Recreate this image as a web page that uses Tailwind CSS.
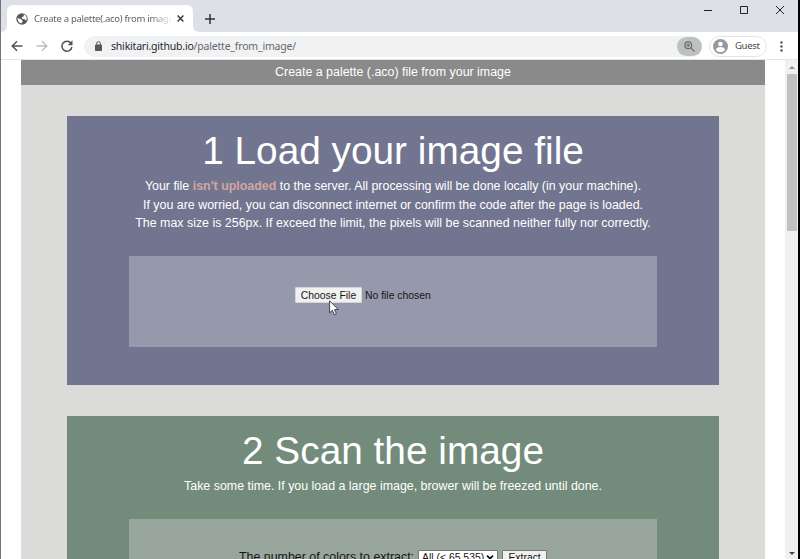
<!DOCTYPE html>
<html lang="en">
<head>
<meta charset="utf-8">
<title>Create a palette(.aco) from image</title>
<script src="https://cdn.jsdelivr.net/npm/@tailwindcss/browser@4"></script>
</head>
<body class="w-[800px] h-[559px] overflow-hidden bg-white font-['Liberation_Sans',Arial,sans-serif]">
<div class="relative w-[800px] h-[559px] overflow-hidden border-l border-l-[#737378] border-r-2 border-r-black flex flex-col">
  <!-- Tab strip -->
  <header class="h-8 shrink-0 bg-[#dde1e7] flex items-end font-['Noto_Sans',sans-serif]">
    <div class="w-1.5 h-full flex items-end bg-white"><div class="w-full h-full bg-[#dde1e7] rounded-br-md"></div></div>
    <div class="w-[186px] h-[27px] bg-white rounded-t-[6px] flex items-center pl-[9px] pr-2">
      <svg class="w-3 h-3 shrink-0" viewBox="0 0 24 24"><circle cx="12" cy="12" r="11.500" fill="#54585d"/><path d="M3 10l6 2 4 3v3l-3 3C6 20 3 16 3 10zM12 3h3l1 3-3 2-2 2 2 2h4l2 3 2-1c2-5-1-10-6-11z" fill="#fff"/></svg>
      <div class="ml-[6px] w-[137px] overflow-hidden whitespace-nowrap text-[9.500px] tracking-[-0.28px] leading-4 text-transparent bg-clip-text bg-linear-to-r from-[#55585c] from-85% to-[#f4f4f4]">Create a palette(.aco) from image</div>
      <svg class="w-[7px] h-[7px] shrink-0 ml-[6px]" viewBox="0 0 8 8" stroke="#333" stroke-width="1.600"><path d="M.7.7l6.600 6.600M7.300.7L.7 7.300"/></svg>
    </div>
    <div class="w-1.5 h-full bg-white"><div class="w-full h-full bg-[#dde1e7] rounded-bl-md"></div></div>
    <svg class="w-[10px] h-[10px] ml-[6px] mb-[8px]" viewBox="0 0 10 10" stroke="#333" stroke-width="1.500"><path d="M5 0v10M0 5h10"/></svg>
    <div class="ml-auto self-start flex items-center gap-[28px] mt-[5px] pr-[14px] text-[#222]">
      <svg class="w-2 h-[10px]" viewBox="0 0 8 10" stroke="currentColor"><path d="M0 5.500h8"/></svg>
      <svg class="w-2 h-[10px]" viewBox="0 0 8 10" stroke="currentColor" fill="none"><path d="M.5 1.500h7v7h-7z"/></svg>
      <svg class="w-2 h-[10px]" viewBox="0 0 8 10" stroke="currentColor"><path d="M0 1l8 8M8 1L0 9"/></svg>
    </div>
  </header>
  <!-- Toolbar -->
  <nav class="h-[28px] shrink-0 bg-white border-b border-[#e4e5e7] flex items-center pt-px pl-[10px] pr-[15px] font-['Noto_Sans',sans-serif]">
    <svg class="w-3 h-3" viewBox="0 0 12 12" fill="none" stroke="#505458" stroke-width="1.500"><path d="M11.500 6H1.500M6 1.200L1.200 6 6 10.800"/></svg>
    <svg class="w-3 h-3 ml-[13px]" viewBox="0 0 12 12" fill="none" stroke="#bbbdc0" stroke-width="1.400"><path d="M.5 6h10M6 1.200L10.800 6 6 10.800"/></svg>
    <svg class="w-3 h-3 ml-[13px]" viewBox="0 0 12 12" fill="none" stroke="#505458" stroke-width="1.500"><path d="M10 3.200A5 5 0 1 0 10.900 7"/><path d="M11.500.3v4.900H6.700z" fill="#505458" stroke="none"/></svg>
    <div class="ml-[11px] w-[618px] h-[21px] rounded-full bg-[#f0f2f4] flex items-center pl-[11px]">
      <svg class="w-[7px] h-[10px]" viewBox="0 0 7 10"><rect y="3.500" width="7" height="6.500" rx=".8" fill="#55585d"/><path d="M1.700 4V2.400a1.800 1.800 0 0 1 3.600 0V4" fill="none" stroke="#55585d"/></svg>
      <div class="ml-[9px] text-[10.500px] tracking-[-0.2px] leading-4 whitespace-nowrap text-[#65696e]"><span class="text-[#26292d]">shikitari.github.io</span>/palette_from_image/</div>
      <div class="ml-auto w-[25px] h-[19px] rounded-full bg-[#bdc1c0] flex items-center justify-center">
        <svg class="w-[11px] h-[11px]" viewBox="0 0 11 11" fill="none" stroke="#686c6e" stroke-width="1.200"><circle cx="4.200" cy="4.200" r="3.400"/><path d="M6.700 6.700L10.500 10.500M2.500 4.200h3.400M4.200 2.500v3.400"/></svg>
      </div>
    </div>
    <div class="ml-[7px] w-[58px] h-[21px] rounded-full border border-[#e2e4e6] flex items-center pl-[3px]">
      <svg class="w-[15px] h-[15px]" viewBox="0 0 15 15"><circle cx="7.500" cy="7.500" r="7.500" fill="#959b9b"/><circle cx="7.500" cy="5" r="2.300" fill="#fff"/><path d="M3 11c0-4 9-4 9 0-2 2.800-7 2.800-9 0z" fill="#fff"/></svg>
      <span class="ml-[7px] text-[9.500px] leading-4 tracking-[-0.3px] text-[#44484c]">Guest</span>
    </div>
    <svg class="ml-auto w-[3px] h-[11px]" viewBox="0 0 3 11" fill="#505458"><circle cx="1.500" cy="1.500" r="1.200"/><circle cx="1.500" cy="5.500" r="1.200"/><circle cx="1.500" cy="9.500" r="1.200"/></svg>
  </nav>
  <!-- Page -->
  <div class="flex-1 min-h-0 flex">
    <main class="w-[744px] ml-[20px] mr-[20px] bg-[#dbdcda] text-white text-center overflow-hidden">
      <div class="h-[25px] bg-[#8a8a8a] text-[12.420px] leading-[25px] whitespace-nowrap">Create a palette (.aco) file from your image</div>
      <section class="mt-[31px] mx-[46px] h-[269px] bg-[#72758f] pt-[12px] px-[62px]">
        <h1 class="text-[38.8px] leading-[46px] whitespace-nowrap">1 Load your image file</h1>
        <div class="mt-[3px] text-[12.420px] leading-[18.700px] whitespace-nowrap">
          <p>Your file <b class="text-[#d4a5a2]">isn't uploaded</b> to the server. All processing will be done locally (in your machine).</p>
          <p>If you are worried, you can disconnect internet or confirm the code after the page is loaded.</p>
          <p>The max size is 256px. If exceed the limit, the pixels will be scanned neither fully nor correctly.</p>
        </div>
        <div class="mt-[23px] h-[91px] bg-[#9698ac] pt-[31px] pl-[166px] flex items-start text-[10.4px] text-[#161616]">
          <button class="w-[67px] h-[16px] bg-[#f1f1f1] border border-[#d5d5d8] rounded-[1px] leading-[15px] whitespace-nowrap">Choose File</button>
          <span class="ml-[3px] leading-[17px] whitespace-nowrap">No file chosen</span>
        </div>
      </section>
      <section class="mt-[31px] mx-[46px] h-[269px] bg-[#738b7b] pt-[12px] px-[62px]">
        <h1 class="text-[38.8px] leading-[46px] whitespace-nowrap">2 Scan the image</h1>
        <p class="mt-[3px] text-[12.420px] leading-[18.700px] whitespace-nowrap">Take some time. If you load a large image, brower will be freezed until done.</p>
        <div class="mt-[23px] h-[91px] bg-[#99a69d] pt-[31px] flex items-start justify-center text-[10.4px] text-[#161616]">
          <label class="text-[12.420px] leading-[15px] whitespace-nowrap">The number of colors to extract:</label>
          <div class="ml-[4px] w-[80px] h-[16px] bg-white border border-[#777] rounded-[1px] flex items-center pl-[3px] leading-[14px] whitespace-nowrap">All (&lt; 65,535)<svg class="ml-auto mr-[3px] w-[8px] h-[5px]" viewBox="0 0 8 5" fill="none" stroke="#111" stroke-width="1.700"><path d="M1 .7l3 3 3-3"/></svg></div>
          <button class="ml-[4px] w-[45px] h-[16px] bg-[#efefef] border border-[#777] rounded-[1px] leading-[14px]">Extract</button>
        </div>
      </section>
    </main>
    <aside class="w-[13px] bg-[#f0f0f0] flex flex-col items-center">
      <svg class="mt-[6px] w-[6px] h-[3px] shrink-0" viewBox="0 0 6 3"><path d="M0 3l3-3 3 3z" fill="#8c8c8c"/></svg>
      <div class="mt-[5px] w-[10px] h-[157px] shrink-0 bg-[#bfc1c0]"></div>
      <svg class="mt-auto mb-[4px] w-[6px] h-[3px] shrink-0" viewBox="0 0 6 3"><path d="M0 0h6L3 3z" fill="#444"/></svg>
    </aside>
  </div>
  <!-- Pointer -->
  <svg class="absolute left-[328px] top-[300px] w-[10px] h-[16px]" viewBox="0 0 10 16"><path d="M.6.800v12l2.800-2.500 1.900 4.500 2.100-.9-1.900-4.300h3.800z" fill="#fff" stroke="#34343c" stroke-width=".9"/></svg>
</div>
</body>
</html>
